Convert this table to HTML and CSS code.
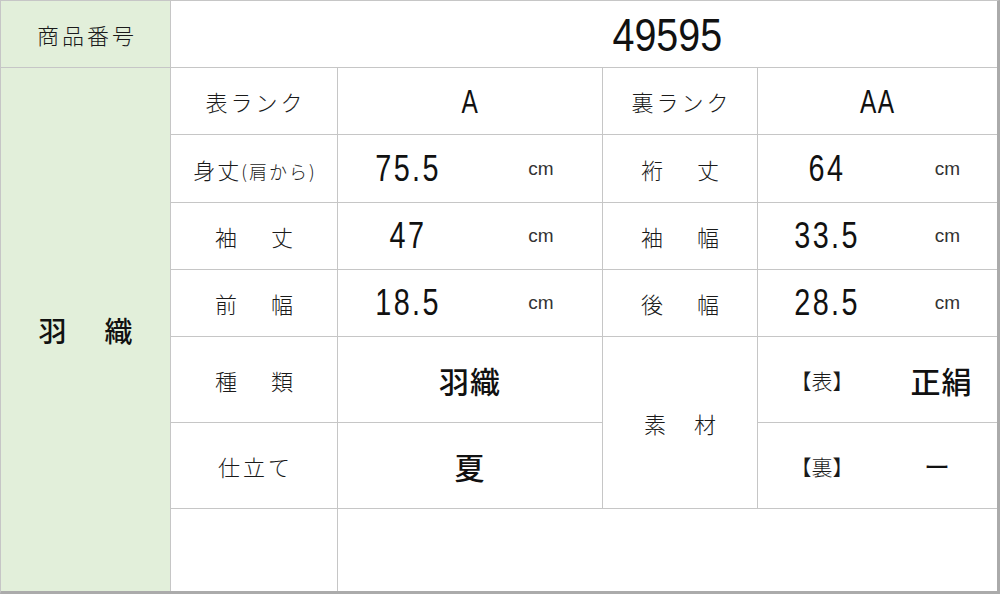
FILE: index.html
```html
<!DOCTYPE html>
<html lang="ja">
<head>
<meta charset="utf-8">
<title>商品番号 49595</title>
<link rel="stylesheet" href="styles.css">
</head>
<body>
<div class="sheet">
  <div class="cell head green"><span class="label">商品番号</span></div>
  <div class="cell code"><span class="num big">49595</span></div>

  <div class="cell kind green"><span class="kind-text">羽　織</span></div>

  <div class="cell"><span class="label">表ランク</span></div>
  <div class="cell"><span class="num rank">A</span></div>
  <div class="cell"><span class="label">裏ランク</span></div>
  <div class="cell"><span class="num rank">AA</span></div>

  <div class="cell"><span class="label tight">身丈<small class="note">(肩から)</small></span></div>
  <div class="cell measure left"><span class="num">75.5</span><span class="unit">cm</span></div>
  <div class="cell"><span class="label wide">裄　丈</span></div>
  <div class="cell measure right"><span class="num">64</span><span class="unit">cm</span></div>

  <div class="cell"><span class="label wide">袖　丈</span></div>
  <div class="cell measure left"><span class="num">47</span><span class="unit">cm</span></div>
  <div class="cell"><span class="label wide">袖　幅</span></div>
  <div class="cell measure right"><span class="num">33.5</span><span class="unit">cm</span></div>

  <div class="cell"><span class="label wide">前　幅</span></div>
  <div class="cell measure left"><span class="num">18.5</span><span class="unit">cm</span></div>
  <div class="cell"><span class="label wide">後　幅</span></div>
  <div class="cell measure right"><span class="num">28.5</span><span class="unit">cm</span></div>

  <div class="cell"><span class="label wide">種　類</span></div>
  <div class="cell"><span class="value">羽織</span></div>
  <div class="cell material"><span class="label">素　材</span></div>
  <div class="cell fabric"><span class="bracket">【表】</span><span class="value">正絹</span></div>

  <div class="cell"><span class="label">仕立て</span></div>
  <div class="cell"><span class="value">夏</span></div>
  <div class="cell fabric"><span class="bracket">【裏】</span><span class="value dash">ー</span></div>

  <div class="cell"></div>
  <div class="cell blank"></div>
</div>
</body>
</html>
```

FILE: styles.css
```css
html, body {
  margin: 0;
  padding: 0;
  background: #ffffff;
}

body {
  font-family: "Noto Sans CJK JP", "Liberation Sans", sans-serif;
  color: #1a1a1a;
}

.sheet {
  width: 1000px;
  height: 594px;
  box-sizing: border-box;
  display: grid;
  grid-template-columns: 169px 166px 264px 154px 239px;
  grid-template-rows: 66px 66px 67px 66px 66px 85px 85px 82px;
  gap: 1px;
  background: #c6c6c6;
  border-left: 1px solid #c6c6c6;
  border-top: 1px solid #c6c6c6;
  border-right: 3px solid #ababab;
  border-bottom: 3px solid #ababab;
}

.cell {
  background: #ffffff;
  display: flex;
  align-items: center;
  justify-content: center;
  overflow: hidden;
}

.green {
  background: #e2efda;
}

.code {
  grid-column: 2 / 6;
  padding-left: 167px;
}

.kind {
  grid-column: 1;
  grid-row: 2 / 9;
}

.material {
  grid-column: 4;
  grid-row: 6 / 8;
}

.blank {
  grid-column: 3 / 6;
}

.label {
  font-size: 22px;
  font-weight: 300;
  letter-spacing: 3px;
  padding-left: 3px;
  white-space: nowrap;
}

.label.wide {
  letter-spacing: 6px;
  padding-left: 6px;
}

.label.tight {
  letter-spacing: 2px;
  padding-left: 2px;
}

.note {
  font-size: 18px;
  letter-spacing: 2px;
}

.kind-text {
  font-size: 28px;
  font-weight: 500;
  letter-spacing: 5px;
  padding-left: 5px;
  color: #111111;
}

.num {
  font-family: "Liberation Sans", Arial, sans-serif;
  font-size: 36px;
  letter-spacing: 3px;
  color: #111111;
  display: inline-block;
  transform: scaleX(0.8);
  white-space: nowrap;
}

.num.big {
  font-size: 47px;
  letter-spacing: 0;
  transform: scaleX(0.84);
}

.num.rank {
  font-size: 34px;
  letter-spacing: 2px;
  transform: scaleX(0.72);
}

.measure {
  display: grid;
  align-items: center;
  justify-items: center;
}

.measure.left {
  grid-template-columns: 140px 1fr;
}

.measure.right {
  grid-template-columns: 138px 1fr;
}

.unit {
  font-family: "Liberation Sans", Arial, sans-serif;
  font-size: 19px;
  color: #333333;
  padding-left: 2px;
}

.value {
  font-size: 30px;
  font-weight: 500;
  letter-spacing: 1px;
  color: #111111;
}

.value.dash {
  font-weight: 400;
  font-size: 26px;
  padding-right: 8px;
}

.fabric {
  display: grid;
  grid-template-columns: 128px 1fr;
  align-items: center;
  justify-items: center;
}

.bracket {
  font-size: 21px;
  font-weight: 300;
  letter-spacing: 0;
}
```
